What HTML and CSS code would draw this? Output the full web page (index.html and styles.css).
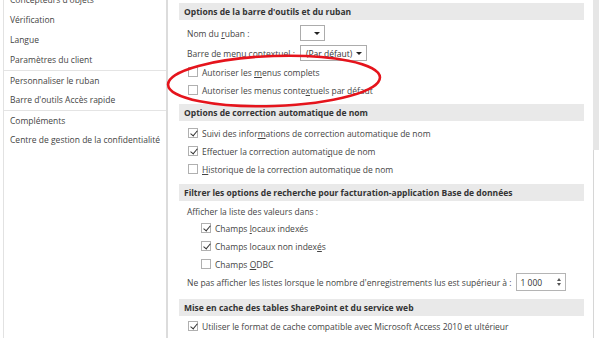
FILE: index.html
```html
<!DOCTYPE html>
<html lang="fr">
<head>
<meta charset="utf-8">
<link rel="stylesheet" href="styles.css">
</head>
<body>
<div class="app">
  <nav class="sidebar">
    <ul class="nav-list">
      <li class="nav-item">Concepteurs d'objets</li>
      <li class="nav-item">Vérification</li>
      <li class="nav-item">Langue</li>
      <li class="nav-item">Paramètres du client</li>
      <li class="nav-item sep">Personnaliser le ruban</li>
      <li class="nav-item">Barre d'outils Accès rapide</li>
      <li class="nav-item sep">Compléments</li>
      <li class="nav-item">Centre de gestion de la confidentialité</li>
    </ul>
  </nav>
  <main class="content">
    <h2 class="section-title t1">Options de la barre d'outils et du ruban</h2>
    <div class="row drop-row">
      <span class="label lbl-w">Nom du <u>r</u>uban :</span>
      <span class="select sel-small"><span class="caret"></span></span>
    </div>
    <div class="row drop-row">
      <span class="label lbl-w">Barre de men<u>u</u> contextuel :</span>
      <span class="select sel-wide"><span class="sel-text">(Par défaut)</span><span class="caret"></span></span>
    </div>
    <div class="row check-row cb-row">
      <span class="cb"></span><span class="label">Autoriser les <u>m</u>enus complets</span>
    </div>
    <div class="row check-row cb-row">
      <span class="cb"></span><span class="label">Autoriser les menus conte<u>x</u>tuels par défaut</span>
    </div>

    <h2 class="section-title t2">Options de correction automatique de nom</h2>
    <div class="row cb-row">
      <span class="cb checked"></span><span class="label">Suivi des infor<u>m</u>ations de correction automatique de nom</span>
    </div>
    <div class="row cb-row">
      <span class="cb checked"></span><span class="label">Effectuer la correction automati<u>q</u>ue de nom</span>
    </div>
    <div class="row cb-row">
      <span class="cb"></span><span class="label"><u>H</u>istorique de la correction automatique de nom</span>
    </div>

    <h2 class="section-title t3">Filtrer les options de recherche pour facturation-application Base de données</h2>
    <div class="row text-row">
      <span class="label">Afficher la liste des valeurs dans :</span>
    </div>
    <div class="row cb-row nested">
      <span class="cb checked"></span><span class="label">Champs <u>l</u>ocaux indexés</span>
    </div>
    <div class="row cb-row nested">
      <span class="cb checked"></span><span class="label">Champs locaux non index<u>é</u>s</span>
    </div>
    <div class="row cb-row nested">
      <span class="cb"></span><span class="label">Champs <u>O</u>DBC</span>
    </div>
    <div class="row spin-row">
      <span class="label">Ne pas afficher les listes lorsque le nombre d'enregistrements lus est supérieur à :</span>
      <span class="spinner"><span class="spin-val">1 000</span><span class="spin-arrows"><span class="up"></span><span class="down"></span></span></span>
    </div>

    <h2 class="section-title t4">Mise en cache des tables SharePoint et du service web</h2>
    <div class="row cb-row">
      <span class="cb checked"></span><span class="label">Utiliser le format de cache compatible avec Microsoft Access 2010 et ultérieur</span>
    </div>
  </main>
  <div class="scrollbar"><div class="thumb"></div></div>
</div>
<svg class="annotation" width="600" height="338" viewBox="0 0 600 338">
  <ellipse cx="274" cy="81" rx="106" ry="25" transform="rotate(-2 274 81)" fill="none" stroke="#e5141c" stroke-width="2.6"/>
</svg>
</body>
</html>
```
FILE: styles.css
```css
* { box-sizing: border-box; }
html, body { margin: 0; padding: 0; }
body {
  width: 600px;
  height: 338px;
  overflow: hidden;
  background: #ffffff;
  font-family: "Open Sans", "Noto Sans", "Liberation Sans", sans-serif;
  font-size: 8.5px;
  color: #454545;
  position: relative;
}
u { text-decoration-thickness: 1px; text-underline-offset: 1px; }

.app {
  display: flex;
  height: 338px;
}

.sidebar {
  width: 165px;
  margin-left: 3px;
  border-left: 1px solid #e2e2e2;
  border-right: 2px solid #dcdcdc;
  height: 338px;
  flex: none;
}
.nav-list {
  list-style: none;
  margin: -10px 0 0 0;
  padding: 0;
}
.nav-item {
  height: 20px;
  line-height: 20px;
  padding-left: 6px;
  white-space: nowrap;
  color: #444;
}
.nav-item.sep {
  border-top: 1px solid #e4e4e4;
  line-height: 19px;
}

.content {
  width: 405px;
  margin-left: 11px;
  padding-top: 3px;
  flex: none;
}

.section-title {
  margin: 0;
  height: 17px;
  line-height: 17px;
  background: #e9e9e9;
  padding-left: 5px;
  font-size: 8.5px;
  font-weight: 700;
  color: #333;
  white-space: nowrap;
  overflow: hidden;
}
.t1 { margin-top: 0; }
.t2 { margin-top: 5px; }
.t3 { margin-top: 6px; }
.t4 { margin-top: 8px; }

.row {
  display: flex;
  align-items: center;
  height: 18px;
  padding-left: 8px;
  white-space: nowrap;
}
.drop-row { height: 20px; }
.t1 + .drop-row { margin-top: 3px; }
.t2 + .row { margin-top: 3px; }
.t3 + .row { margin-top: 2px; height: 16px; }
.t4 + .row { margin-top: 1px; }
.nested { padding-left: 21px; }

.lbl-w { width: 113px; }

.select {
  position: relative;
  display: inline-flex;
  align-items: center;
  height: 16px;
  border: 1px solid #acacac;
  background: #fff;
}
.sel-small { width: 25px; }
.sel-wide { width: 67px; }
.sel-text { padding-left: 5px; color: #333; }
.caret {
  position: absolute;
  right: 4px;
  top: 6px;
  width: 0;
  height: 0;
  border-left: 3px solid transparent;
  border-right: 3px solid transparent;
  border-top: 3px solid #222;
}

.cb {
  flex: none;
  width: 10px;
  height: 10px;
  border: 1px solid #b0b0b0;
  background: #fff;
  margin-left: 1px;
  margin-right: 4px;
  position: relative;
}
.cb.checked::after {
  content: "";
  position: absolute;
  left: 2.5px;
  top: 0px;
  width: 3px;
  height: 6px;
  border-right: 1px solid #333;
  border-bottom: 1px solid #333;
  transform: rotate(40deg);
}

.spin-row { height: 18px; }
.spinner {
  margin-left: 4px;
  width: 50px;
  height: 18px;
  border: 1px solid #b4b4b4;
  display: flex;
  align-items: center;
  justify-content: space-between;
  padding: 0 4px 0 4px;
}
.spin-val { color: #333; }
.spin-arrows {
  display: flex;
  flex-direction: column;
  gap: 2px;
}
.up, .down {
  width: 0; height: 0;
  border-left: 2px solid transparent;
  border-right: 2px solid transparent;
}
.up { border-bottom: 3px solid #555; }
.down { border-top: 3px solid #555; }

.scrollbar {
  margin-left: 9px;
  width: 6px;
  height: 338px;
  border-left: 1px solid #d6d6d6;
  flex: none;
}
.thumb {
  height: 150px;
  background: #e6e6e6;
  margin-left: -1px;
}

.annotation {
  position: absolute;
  left: 0;
  top: 0;
  pointer-events: none;
}
```
